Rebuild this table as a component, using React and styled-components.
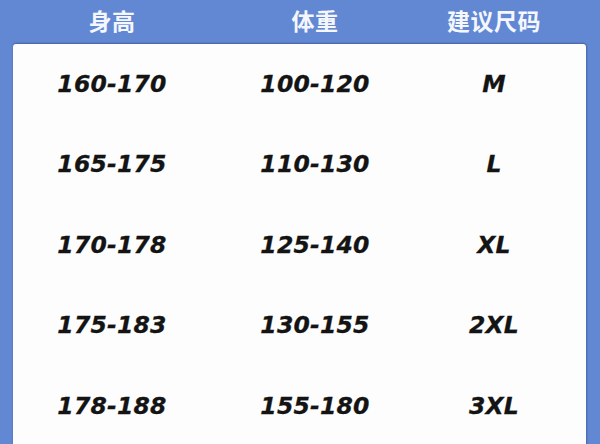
import React from 'react';
import styled, { createGlobalStyle } from 'styled-components';

const GlobalStyle = createGlobalStyle`
  html, body {
    margin: 0;
    padding: 0;
    background: #6388d3;
  }
  body {
    width: 600px;
    height: 444px;
    overflow: hidden;
  }
`;

const Page = styled.div`
  width: 600px;
  height: 444px;
  display: flex;
  flex-direction: column;
  background: #6388d3;
  overflow: hidden;
`;

const HeaderRow = styled.div`
  display: grid;
  grid-template-columns: 198px 208px 150px;
  flex-shrink: 0;
  padding: 0 0 4px 13px;
  height: 44px;
  align-items: center;
  box-sizing: border-box;
`;

const HeadCell = styled.div`
  text-align: center;
  color: #f4f7fd;
  font-family: "Noto Sans CJK SC", "Noto Sans", sans-serif;
  font-weight: 700;
  font-size: 23px;
  letter-spacing: 0.5px;
  line-height: 1;
`;

const Panel = styled.div`
  flex: 1 0 auto;
  margin: 0 14px 0 13px;
  background: #fdfdfd;
  border-radius: 3px 3px 0 0;
  box-shadow: 0 -1px 2px rgba(30, 50, 100, 0.35), 1px 0 2px rgba(30, 50, 100, 0.3);
  display: flex;
  flex-direction: column;
`;

const Row = styled.div`
  display: grid;
  grid-template-columns: 198px 208px 150px;
  flex-shrink: 0;
  height: 80.5px;
  align-items: center;
`;

const Cell = styled.div`
  text-align: center;
  color: #141414;
  font-family: "DejaVu Sans", "Liberation Sans", sans-serif;
  font-weight: 700;
  font-style: italic;
  font-size: 23.5px;
  letter-spacing: 0.2px;
  -webkit-text-stroke: 0.3px #141414;
  line-height: 1;
`;

const rows = [
  ['160-170', '100-120', 'M'],
  ['165-175', '110-130', 'L'],
  ['170-178', '125-140', 'XL'],
  ['175-183', '130-155', '2XL'],
  ['178-188', '155-180', '3XL'],
];

export default function App() {
  return (
    <Page>
      <GlobalStyle />
      <HeaderRow>
        <HeadCell>身高</HeadCell>
        <HeadCell>体重</HeadCell>
        <HeadCell>建议尺码</HeadCell>
      </HeaderRow>
      <Panel>
        {rows.map((r) => (
          <Row key={r[0]}>
            {r.map((v, i) => (
              <Cell key={i}>{v}</Cell>
            ))}
          </Row>
        ))}
      </Panel>
    </Page>
  );
}
